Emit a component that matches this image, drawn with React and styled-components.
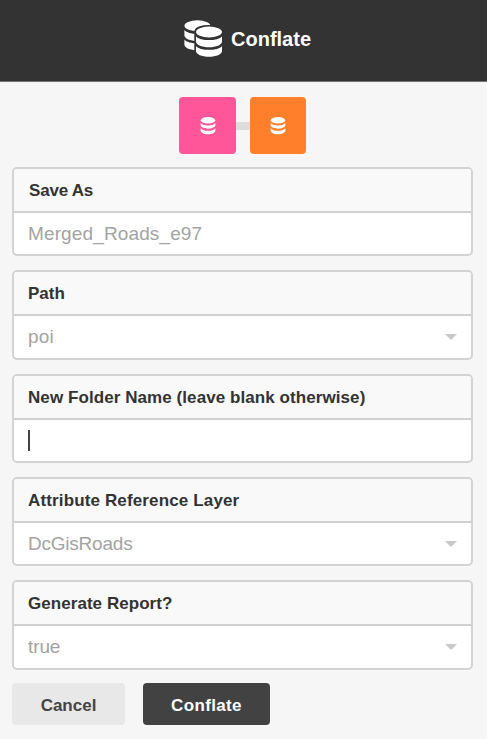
import React from "react";
import styled, { createGlobalStyle } from "styled-components";

const GlobalStyle = createGlobalStyle`
  * { box-sizing: border-box; }
  html, body { margin: 0; height: 100%; background: #f6f6f6; }
  body { font-family: "Liberation Sans", Arial, sans-serif; overflow: hidden; }
`;

const Panel = styled.main`
  display: flex;
  flex-direction: column;
  width: 487px;
  height: 739px;
  background: #f6f6f6;
`;

const Header = styled.header`
  display: flex;
  align-items: center;
  height: 82px;
  padding: 0 0 5px 184px;
  gap: 7px;
  background: #333;
  border-bottom: 1px solid #737373;
`;

const Title = styled.h1`
  margin: 0;
  padding-top: 1px;
  color: #fff;
  font-size: 20px;
  line-height: 24px;
  font-weight: 700;
  font-variant-ligatures: none;
`;

const Body = styled.div`
  flex: 1;
  border-right: 1px solid #fafafa;
`;

const Layers = styled.div`
  display: flex;
  align-items: center;
  padding: 15px 0 13.4px 179.4px;
`;

const LayerTile = styled.div`
  display: flex;
  align-items: center;
  justify-content: center;
  width: 56.5px;
  height: 56.6px;
  padding-top: 1px;
  border-radius: 4px;
  background: ${(p) => p.$color};
`;

const Link = styled.div`
  width: 13.7px;
  height: 8px;
  margin-top: 1px;
  background: #dcdcdc;
`;

const Form = styled.form`
  display: flex;
  flex-direction: column;
  gap: 13.9px;
  padding: 0 13px 0 12px;
`;

const Field = styled.div`
  height: 89.4px;
  overflow: hidden;
  display: flex;
  flex-direction: column;
  border: 2px solid #d3d3d3;
  border-radius: 5px;
  background: #fff;
`;

const Label = styled.label`
  height: 44px;
  padding-left: ${(p) => p.$indent || 14}px;
  padding-top: 1px;
  border-bottom: 2px solid #d0d0d0;
  background: #f9f9f9;
  color: #333;
  font-size: 17px;
  font-weight: 700;
  line-height: 42.6px;
  letter-spacing: ${(p) => p.$tracking || 0}px;
`;

const Value = styled.div`
  flex: 1;
  display: flex;
  align-items: center;
  justify-content: space-between;
  padding: 0 14px;
  color: #a3a3a3;
  font-size: 19px;
  line-height: 24px;
  letter-spacing: ${(p) => p.$tracking || 0}px;
`;

const Arrow = styled.span`
  border: 6px solid transparent;
  border-top-color: #c9c9c9;
  border-bottom: 0;
`;

const Caret = styled.span`
  width: 1.5px;
  height: 21px;
  background: #444;
`;

const Actions = styled.div`
  display: flex;
  gap: 18px;
`;

const Button = styled.button`
  width: ${(p) => p.$width}px;
  height: 42px;
  padding: 3px 0 0;
  border: 0;
  border-radius: 4px;
  background: ${(p) => (p.$primary ? "#424242" : "#e8e8e8")};
  color: ${(p) => (p.$primary ? "#fff" : "#444")};
  font: 700 17px "Liberation Sans", Arial, sans-serif;
  font-variant-ligatures: none;
  letter-spacing: ${(p) => (p.$primary ? 0.35 : 0)}px;
`;

const stackTop = "M12 13a13 5.4 0 0 1 26 0a13 5.4 0 0 1-26 0z";
const stackMiddle = "M12 17.2c2 2.5 7 3.9 13 3.9s11-1.4 13-3.9v5.3c0 3.3-5.8 5.8-13 5.8s-13-2.5-13-5.8z";
const stackBottom = "M12 26.9c2 2.5 7 3.9 13 3.9s11-1.4 13-3.9v5c0 3.3-5.8 5.8-13 5.8s-13-2.5-13-5.8z";
const stackOutline = "M12 13C12 5.8 38 5.8 38 13V32C38 39.7 12 39.7 12 32z";

const LayersIcon = () => (
  <svg width="40" height="38" viewBox="0 0 40 38" fill="#fff" aria-hidden="true">
    <g transform="translate(-11.6 -6.3)">
      <path d={stackTop} />
      <path d={stackMiddle} />
      <path d={stackBottom} />
    </g>
    <path d={stackOutline} fill="#333" stroke="#333" strokeWidth="3.4" />
    <path d={stackTop} />
    <path d={stackMiddle} />
    <path d={stackBottom} />
  </svg>
);

const DatabaseIcon = () => (
  <svg width="16" height="20" viewBox="0 0 16 20" fill="#fff" aria-hidden="true">
    <ellipse cx="8" cy="4.2" rx="7.2" ry="3.2" />
    <path d="M.6 6.9C2 8.6 4.8 9.4 8 9.4s6-.8 7.400-2.500v2.200c0 2-3.400 3.700-7.400 3.700S.6 11.100.6 9.100z" />
    <path d="M.6 12.200c1.400 1.700 4.200 2.600 7.400 2.600s6-.9 7.400-2.600v2.200c0 2-3.400 3.800-7.400 3.800s-7.400-1.800-7.400-3.800z" />
  </svg>
);

const fields = [
  { label: "Save As", value: "Merged_Roads_e97", indent: 15, tracking: -0.2, valueTracking: 0.13 },
  { label: "Path", value: "poi", select: true, valueTracking: 0.2 },
  { label: "New Folder Name (leave blank otherwise)", caret: true, tracking: 0.075 },
  { label: "Attribute Reference Layer", value: "DcGisRoads", select: true, tracking: 0.14, valueTracking: -0.22 },
  { label: "Generate Report?", value: "true", select: true, tracking: 0.05, valueTracking: -0.1 },
];

export default function App() {
  return (
    <>
      <GlobalStyle />
      <Panel>
        <Header>
          <LayersIcon />
          <Title>Conflate</Title>
        </Header>
        <Body>
          <Layers>
            <LayerTile $color="#ff5599"><DatabaseIcon /></LayerTile>
            <Link />
            <LayerTile $color="#ff7f2a"><DatabaseIcon /></LayerTile>
          </Layers>
          <Form>
            {fields.map((f) => (
              <Field key={f.label}>
                <Label $tracking={f.tracking} $indent={f.indent}>{f.label}</Label>
                <Value $tracking={f.valueTracking}>
                  {f.caret ? <Caret /> : <span>{f.value}</span>}
                  {f.select && <Arrow />}
                </Value>
              </Field>
            ))}
            <Actions>
              <Button type="button" $width={113}>Cancel</Button>
              <Button type="button" $primary $width={127}>Conflate</Button>
            </Actions>
          </Form>
        </Body>
      </Panel>
    </>
  );
}
